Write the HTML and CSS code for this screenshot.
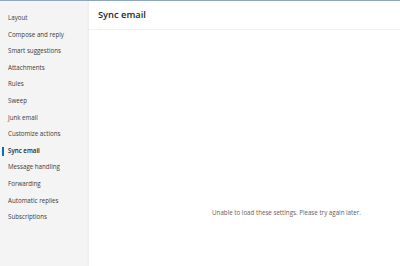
FILE: index.html
```html
<!DOCTYPE html>
<html>
<head>
  <title>Sync email</title>
  <meta name="viewport" content="width=device-width, initial-scale=1.0">
  <link rel="stylesheet" href="styles.css">
</head>
<body>
  <div class="settings">
    <!-- Left nav -->
    <div class="nav">
      <div class="nav-item">Layout</div>
      <div class="nav-item">Compose and reply</div>
      <div class="nav-item">Smart suggestions</div>
      <div class="nav-item">Attachments</div>
      <div class="nav-item">Rules</div>
      <div class="nav-item">Sweep</div>
      <div class="nav-item">Junk email</div>
      <div class="nav-item">Customize actions</div>
      <div class="nav-item active">Sync email</div>
      <div class="nav-item">Message handling</div>
      <div class="nav-item">Forwarding</div>
      <div class="nav-item">Automatic replies</div>
      <div class="nav-item">Subscriptions</div>
    </div>

    <!-- Content pane -->
    <div class="pane">
      <div class="pane-header">Sync email</div>
      <div class="pane-body">
        <div class="message">Unable to load these settings. Please try again later.</div>
      </div>
    </div>
  </div>
</body>
</html>
```

FILE: styles.css
```css
:root {
  --nav-bg: #f4f4f4;
  --text: #3b3a39;
  --muted: #5f5e5d;
  --accent: #0f6cbd;
}

* {
  box-sizing: border-box;
}

body, html {
  margin: 0;
  padding: 0;
  height: 100%;
  font-family: 'Open Sans', 'Noto Sans', sans-serif;
  overflow: hidden;
  background: #fff;
}

.settings {
  display: flex;
  height: 100%;
  border-top: 1px solid #8ea8c3;
}

/* Nav */
.nav {
  width: 89px;
  flex-shrink: 0;
  background: var(--nav-bg);
  padding-top: 9px;
}

.nav-item {
  position: relative;
  height: 16.6px;
  line-height: 16.6px;
  padding-left: 8px;
  font-size: 6.2px;
  color: var(--text);
  white-space: nowrap;
}

.nav-item.active {
  color: #201f1e;
  font-weight: 600;
}

.nav-item.active:before {
  content: "";
  position: absolute;
  left: 2px;
  top: 4px;
  width: 1.5px;
  height: 9px;
  background: var(--accent);
}

/* Pane */
.pane {
  flex: 1;
  display: flex;
  flex-direction: column;
  box-shadow: -1px 0 2px rgba(0, 0, 0, 0.04);
}

.pane-header {
  height: 29px;
  padding: 7px 0 0 9px;
  font-size: 9.3px;
  font-weight: 600;
  color: #201f1e;
  border-bottom: 1px solid #f2f2f2;
}

.pane-body {
  flex: 1;
  display: flex;
  justify-content: center;
  padding: 178px 0 0 84px;
}

.message {
  font-size: 6.2px;
  color: var(--muted);
}
```
